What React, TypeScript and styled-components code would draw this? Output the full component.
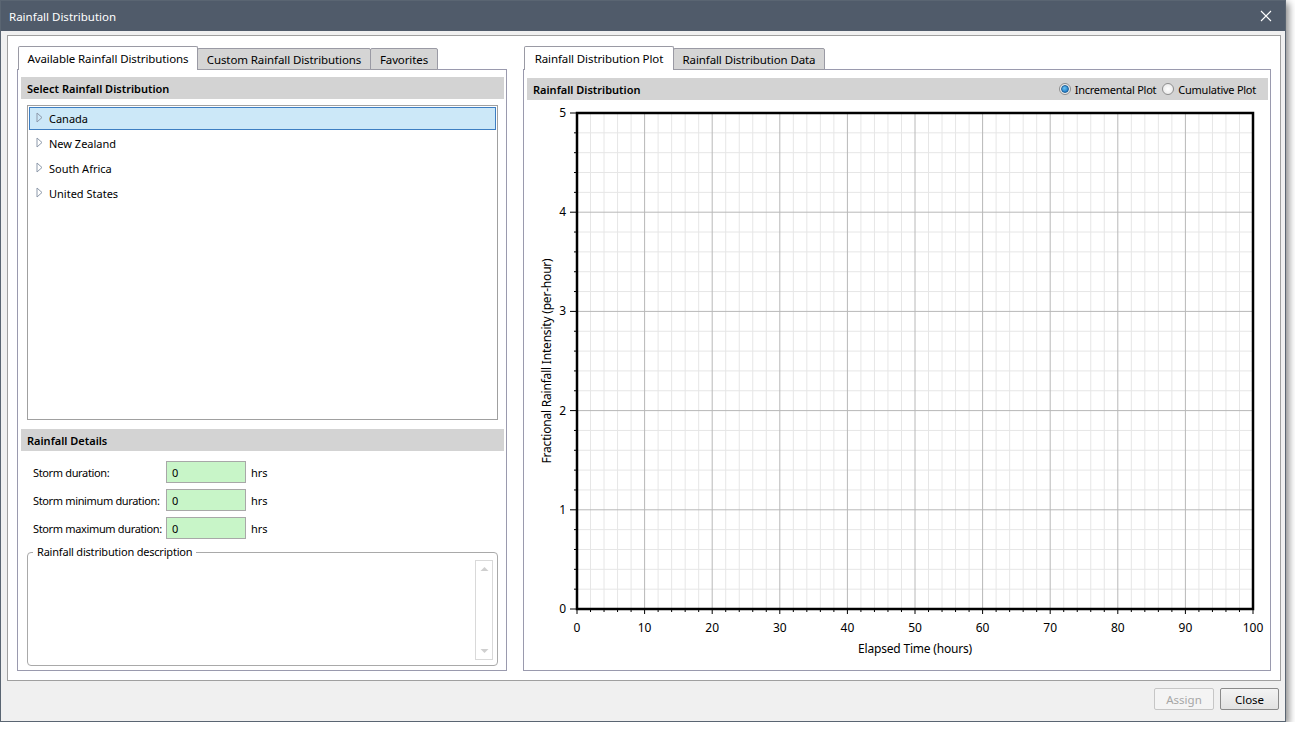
import { FC } from "react";
import styled, { createGlobalStyle } from "styled-components";

const GlobalStyle = createGlobalStyle`
  body {
    margin: 0;
    background: #ffffff;
    font-family: "Noto Sans", "Open Sans", sans-serif;
    font-size: 11.5px;
    color: #000;
  }
  * { box-sizing: border-box; }
`;

const FONT = `"Noto Sans", "Open Sans", sans-serif`;

const leftTabs = [
  { label: "Available Rainfall Distributions", w: 180 },
  { label: "Custom Rainfall Distributions", w: 174 },
  { label: "Favorites", w: 68 },
];
const rightTabs = [
  { label: "Rainfall Distribution Plot", w: 150 },
  { label: "Rainfall Distribution Data", w: 152 },
];
const regions = ["Canada", "New Zealand", "South Africa", "United States"];
const details = [
  "Storm duration:",
  "Storm minimum duration:",
  "Storm maximum duration:",
];

// chart geometry (svg coords)
const CW = 739;
const CH = 570;
const PL = 50;
const PT = 13;
const PW = 676;
const PH = 496;
const PB = PT + PH;
const PR = PL + PW;

const Chart: FC = () => {
  const xs = Array.from({ length: 51 }, (_, i) => i);
  const ys = Array.from({ length: 26 }, (_, j) => j);
  const xAt = (i: number) => PL + (i * PW) / 50;
  const yAt = (j: number) => PB - (j * PH) / 25;
  return (
    <svg width={CW} height={CH} style={{ display: "block" }}>
      {xs
        .filter((i) => i % 5 !== 0)
        .map((i) => (
          <line key={"xm" + i} x1={xAt(i)} x2={xAt(i)} y1={PT} y2={PB} stroke="#e6e6e6" />
        ))}
      {ys
        .filter((j) => j % 5 !== 0)
        .map((j) => (
          <line key={"ym" + j} x1={PL} x2={PR} y1={yAt(j)} y2={yAt(j)} stroke="#e6e6e6" />
        ))}
      {xs
        .filter((i) => i % 5 === 0)
        .map((i) => (
          <line key={"xM" + i} x1={xAt(i)} x2={xAt(i)} y1={PT} y2={PB} stroke="#b8b8b8" />
        ))}
      {ys
        .filter((j) => j % 5 === 0)
        .map((j) => (
          <line key={"yM" + j} x1={PL} x2={PR} y1={yAt(j)} y2={yAt(j)} stroke="#b8b8b8" />
        ))}
      <rect x={PL} y={PT} width={PW} height={PH} fill="none" stroke="#000" strokeWidth={2.5} />
      {xs.map((i) => (
        <line
          key={"xt" + i}
          x1={xAt(i)}
          x2={xAt(i)}
          y1={PB}
          y2={PB + (i % 5 === 0 ? 5 : 3)}
          stroke="#000"
        />
      ))}
      {ys.map((j) => (
        <line
          key={"yt" + j}
          x1={PL - (j % 5 === 0 ? 7 : 3)}
          x2={PL}
          y1={yAt(j)}
          y2={yAt(j)}
          stroke="#000"
        />
      ))}
      <g fontFamily={FONT} fontSize={12} fill="#000">
        {xs
          .filter((i) => i % 5 === 0)
          .map((i) => (
            <text key={"xl" + i} x={xAt(i)} y={PB + 23} textAnchor="middle">
              {i * 2}
            </text>
          ))}
        {ys
          .filter((j) => j % 5 === 0)
          .map((j) => (
            <text key={"yl" + j} x={PL - 11} y={yAt(j) + 4} textAnchor="end">
              {j / 5}
            </text>
          ))}
        <text x={PL + PW / 2} y={PB + 44} textAnchor="middle" letterSpacing={-0.2}>
          Elapsed Time (hours)
        </text>
        <text
          x={24}
          y={PT + PH / 2}
          textAnchor="middle"
          letterSpacing={-0.2}
          transform={`rotate(-90 24 ${PT + PH / 2})`}
        >
          Fractional Rainfall Intensity (per-hour)
        </text>
      </g>
    </svg>
  );
};

const TreeArrow: FC = () => (
  <svg width="7" height="11" viewBox="0 0 7 11">
    <path d="M1 1 L6 5.5 L1 10 Z" fill="none" stroke="#8d99aa" strokeWidth="1" />
  </svg>
);

const App: FC = () => {
  return (
    <>
      <GlobalStyle />
      <Window>
        <TitleBar>
          <TitleText>Rainfall Distribution</TitleText>
          <CloseGlyph width="12" height="12" viewBox="0 0 12 12">
            <path d="M1 1 L11 11 M11 1 L1 11" stroke="#ffffff" strokeWidth="1.1" />
          </CloseGlyph>
        </TitleBar>
        <Body>
          <Panel>
            <Column $w={490}>
              <TabStrip>
                {leftTabs.map((t, i) => (
                  <Tab key={t.label} $active={i === 0} $w={t.w}>
                    {t.label}
                  </Tab>
                ))}
              </TabStrip>
              <TabContent>
                <SectionHeader>Select Rainfall Distribution</SectionHeader>
                <TreeBox>
                  {regions.map((r, i) => (
                    <TreeItem key={r} $selected={i === 0}>
                      <TreeArrow />
                      <span>{r}</span>
                    </TreeItem>
                  ))}
                </TreeBox>
                <SectionHeader $top={9}>Rainfall Details</SectionHeader>
                <DetailRows>
                  {details.map((d) => (
                    <DetailRow key={d}>
                      <DetailLabel>{d}</DetailLabel>
                      <ValueInput>0</ValueInput>
                      <Unit>hrs</Unit>
                    </DetailRow>
                  ))}
                </DetailRows>
                <GroupBox>
                  <Legend>Rainfall distribution description</Legend>
                  <ScrollTrack>
                    <svg width="9" height="6" viewBox="0 0 9 6">
                      <path d="M0.5 5 L4.5 1 L8.5 5 Z" fill="#cfcfcf" />
                    </svg>
                    <svg width="9" height="6" viewBox="0 0 9 6">
                      <path d="M0.5 1 L4.5 5 L8.5 1 Z" fill="#cfcfcf" />
                    </svg>
                  </ScrollTrack>
                </GroupBox>
              </TabContent>
            </Column>
            <Column>
              <TabStrip>
                {rightTabs.map((t, i) => (
                  <Tab key={t.label} $active={i === 0} $w={t.w}>
                    {t.label}
                  </Tab>
                ))}
              </TabStrip>
              <TabContent>
                <SectionHeader $top={1}>
                  <span>Rainfall Distribution</span>
                  <RadioGroup>
                    <RadioOption>
                      <Radio $checked />
                      Incremental Plot
                    </RadioOption>
                    <RadioOption>
                      <Radio />
                      Cumulative Plot
                    </RadioOption>
                  </RadioGroup>
                </SectionHeader>
                <ChartArea>
                  <Chart />
                </ChartArea>
              </TabContent>
            </Column>
          </Panel>
          <Footer>
            <Button disabled>Assign</Button>
            <Button>Close</Button>
          </Footer>
        </Body>
      </Window>
    </>
  );
};

export default App;

const Window = styled.div`
  width: 1286px;
  height: 722px;
  display: flex;
  flex-direction: column;
  background: #f0f0f0;
  border: 1px solid #5a6572;
  box-shadow: 3px 3px 7px rgba(0, 0, 0, 0.45);
`;

const TitleBar = styled.div`
  height: 30px;
  flex: none;
  background: #505b6a;
  display: flex;
  align-items: center;
  justify-content: space-between;
  padding: 0 13px 0 8px;
`;

const TitleText = styled.div`
  color: #ffffff;
  font-size: 11.5px;
`;

const CloseGlyph = styled.svg`
  display: block;
`;

const Body = styled.div`
  flex: 1;
  display: flex;
  flex-direction: column;
  padding: 4px 4px 0 6px;
`;

const Panel = styled.div`
  height: 646px;
  flex: none;
  background: #ffffff;
  border: 1px solid #a0a0a0;
  padding: 10px 9px 9px 9px;
  display: flex;
  gap: 16px;
`;

const Column = styled.div<{ $w?: number }>`
  display: flex;
  flex-direction: column;
  ${({ $w }) => ($w ? `width: ${$w}px; flex: none;` : "flex: 1;")}
`;

const TabStrip = styled.div`
  height: 24px;
  flex: none;
  display: flex;
  align-items: flex-end;
  padding-left: 1px;
  margin-bottom: -1px;
  position: relative;
  z-index: 1;
`;

const Tab = styled.div<{ $active?: boolean; $w: number }>`
  width: ${({ $w }) => $w}px;
  height: ${({ $active }) => ($active ? 24 : 22)}px;
  margin-right: -1px;
  display: flex;
  align-items: center;
  justify-content: center;
  padding-bottom: ${({ $active }) => ($active ? 1 : 0)}px;
  background: ${({ $active }) => ($active ? "#ffffff" : "#d5d5d5")};
  border: 1px solid #9a9aa4;
  border-bottom: ${({ $active }) => ($active ? "none" : "1px solid #9a9aa4")};
  border-radius: 2px 2px 0 0;
  font-size: 11.5px;
  letter-spacing: -0.1px;
  white-space: nowrap;
  position: relative;
  z-index: ${({ $active }) => ($active ? 2 : 1)};
`;

const TabContent = styled.div`
  flex: 1;
  border: 1px solid #9a9aae;
  padding: 7px 2px 0 3px;
  display: flex;
  flex-direction: column;
`;

const SectionHeader = styled.div<{ $top?: number }>`
  height: 22px;
  flex: none;
  margin-top: ${({ $top }) => $top ?? 0}px;
  background: #d3d3d3;
  display: flex;
  align-items: center;
  justify-content: space-between;
  padding: 0 6px;
  font-weight: 600;
  font-size: 11px;
`;

const TreeBox = styled.div`
  height: 315px;
  flex: none;
  margin: 6px 6px 0 6px;
  border: 1px solid #a0a0a0;
  padding: 1px;
  background: #ffffff;
`;

const TreeItem = styled.div<{ $selected?: boolean }>`
  height: 23px;
  margin-bottom: 2px;
  display: flex;
  align-items: center;
  gap: 6px;
  padding-left: 6px;
  background: ${({ $selected }) => ($selected ? "#cce8f8" : "transparent")};
  border: 1px solid ${({ $selected }) => ($selected ? "#3d7ec2" : "transparent")};
  font-size: 11px;

  svg {
    display: block;
    margin-top: -2px;
  }
`;

const DetailRows = styled.div`
  display: flex;
  flex-direction: column;
  gap: 6px;
  padding: 10px 0 0 12px;
`;

const DetailRow = styled.div`
  display: flex;
  align-items: center;
  height: 22px;
`;

const DetailLabel = styled.div`
  width: 133px;
  white-space: nowrap;
  font-size: 11px;
  letter-spacing: -0.35px;
`;

const ValueInput = styled.div`
  width: 80px;
  height: 22px;
  background: #c8f5c8;
  border: 1px solid #a8a8a8;
  display: flex;
  align-items: center;
  padding-left: 5px;
  font-size: 11px;
`;

const Unit = styled.div`
  margin-left: 5px;
  font-size: 11px;
`;

const GroupBox = styled.fieldset`
  margin: 6px 6px 0 6px;
  height: 121px;
  border: 1px solid #a9a9a9;
  border-radius: 4px;
  padding: 0 4px 4px 0;
  display: flex;
  justify-content: flex-end;
`;

const Legend = styled.legend`
  margin-left: 5px;
  padding: 0 4px;
  font-size: 11px;
  letter-spacing: -0.2px;
  line-height: 14px;
`;

const ScrollTrack = styled.div`
  width: 18px;
  margin-top: 1px;
  height: 100px;
  border: 1px solid #d9d9d9;
  display: flex;
  flex-direction: column;
  justify-content: space-between;
  align-items: center;
  padding: 5px 0;

  svg {
    display: block;
  }
`;

const RadioGroup = styled.div`
  display: flex;
  align-items: center;
  gap: 6px;
  font-weight: 400;
  font-size: 11px;
  letter-spacing: -0.25px;
  margin-right: 6px;
`;

const RadioOption = styled.label`
  display: flex;
  align-items: center;
  gap: 4px;
`;

const Radio = styled.span<{ $checked?: boolean }>`
  width: 12px;
  height: 12px;
  border-radius: 50%;
  border: 1px solid #8e8e8e;
  background: radial-gradient(circle, #ffffff 0%, #e4e4e4 100%);
  display: flex;
  align-items: center;
  justify-content: center;

  &::after {
    content: "";
    display: ${({ $checked }) => ($checked ? "block" : "none")};
    width: 6px;
    height: 6px;
    border-radius: 50%;
    background: radial-gradient(circle at 40% 35%, #6cc4f2 0%, #1b78c6 80%);
    border: 1px solid #1f5f96;
  }
`;

const ChartArea = styled.div`
  flex: 1;
  background: #ffffff;
`;

const Footer = styled.div`
  flex: 1;
  display: flex;
  justify-content: flex-end;
  align-items: flex-start;
  gap: 6px;
  padding: 7px 2px 0 0;
`;

const Button = styled.button`
  height: 22px;
  width: ${({ disabled }) => (disabled ? 60 : 59)}px;
  font-family: ${FONT};
  font-size: 11.5px;
  border-radius: 2px;
  padding: 0;
  border: 1px solid ${({ disabled }) => (disabled ? "#c6c6c6" : "#8a8a8a")};
  color: ${({ disabled }) => (disabled ? "#a6a6a6" : "#000000")};
  background: ${({ disabled }) =>
    disabled ? "#f4f4f4" : "linear-gradient(#f3f3f3, #e2e2e2)"};
`;
